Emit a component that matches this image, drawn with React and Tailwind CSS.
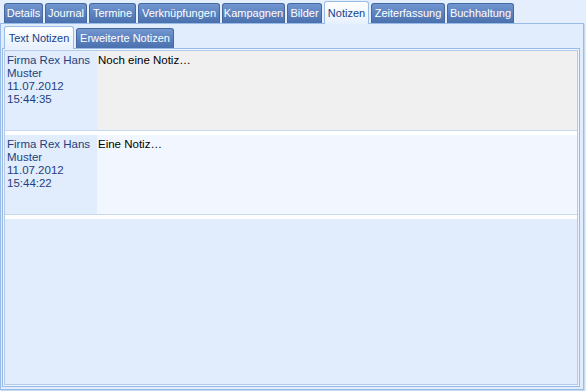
import React from "react";

const tabs = [
  { label: "Details", w: "w-[39px]" },
  { label: "Journal", w: "w-[42px]" },
  { label: "Termine", w: "w-[47px]" },
  { label: "Verknüpfungen", w: "w-[82px]" },
  { label: "Kampagnen", w: "w-[63px]" },
  { label: "Bilder", w: "w-[35px]" },
  { label: "Notizen", w: "w-[45px]", active: true },
  { label: "Zeiterfassung", w: "w-[74px]" },
  { label: "Buchhaltung", w: "w-[67px]" },
];

const notes = [
  { date: "11.07.2012", time: "15:44:35", text: "Noch eine Notiz…", bg: "bg-[#f0f0f0]" },
  { date: "11.07.2012", time: "15:44:22", text: "Eine Notiz…", bg: "bg-[#f2f7ff]" },
];

function Tab({ label, w, active }) {
  if (active) {
    return (
      <div className={`${w} h-[23px] -mb-px relative z-10 flex items-center justify-center rounded-t-[3px] border border-b-0 border-[#99bbe8] bg-gradient-to-b from-white to-[#e6f0fd] text-[#15428b]`}>
        {label}
      </div>
    );
  }
  return (
    <div className={`${w} h-[20px] flex items-center justify-center rounded-t-[3px] border border-b-0 border-[#45689f] bg-gradient-to-b from-[#7196d0] to-[#4a70ae] text-white`}>
      {label}
    </div>
  );
}

export default function App() {
  return (
    <div className="w-[586px] h-[391px] bg-[#e4eefc] text-[11px] leading-[13px] overflow-hidden" style={{ fontFamily: "'Liberation Sans', Arial, sans-serif" }}>
      <div className="flex items-end gap-[2px] pl-[4px] h-[23px]">
        {tabs.map((t) => (
          <Tab key={t.label} {...t} />
        ))}
      </div>
      <div className="w-[584px] h-[367px] border border-[#99bbe8] bg-[#e1edfd] shadow-[1px_1px_0_#c6d9f3] flex flex-col">
        <div className="flex items-end gap-[2px] pl-[3px] h-[24px]">
          <div className="w-[70px] h-[23px] -mb-px relative z-10 flex items-center justify-center rounded-t-[3px] border border-b-0 border-[#99bbe8] bg-gradient-to-b from-white to-[#e6f0fd] text-[#15428b]">
            Text Notizen
          </div>
          <div className="w-[98px] h-[20px] flex items-center justify-center rounded-t-[3px] border border-b-0 border-[#45689f] bg-gradient-to-b from-[#7196d0] to-[#4a70ae] text-white">
            Erweiterte Notizen
          </div>
        </div>
        <div className="ml-[1px] w-[578px] h-[339px] border border-[#99bbe8] p-px bg-[#eef4fd]">
          <div className="h-full border border-[#b6cbe8] bg-[#e1edfd] flex flex-col text-[11.5px]">
            {notes.map((n, i) => (
              <div key={i} className="flex flex-col">
                <div className="flex h-[80px] border-b border-[#c8d8ee]">
                  <div className="w-[92px] pl-[2px] pt-[3px] text-[#1e3f80] bg-[#e1edfd]">
                    <div>Firma Rex Hans</div>
                    <div>Muster</div>
                    <div>{n.date}</div>
                    <div>{n.time}</div>
                  </div>
                  <div className={`flex-1 pl-[1px] pt-[3px] text-black ${n.bg}`}>{n.text}</div>
                </div>
                <div className="h-[4px] bg-white" />
              </div>
            ))}
          </div>
        </div>
      </div>
    </div>
  );
}
